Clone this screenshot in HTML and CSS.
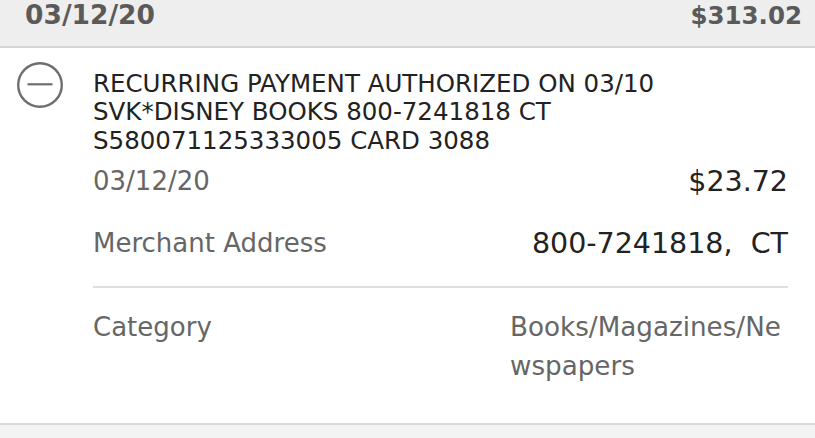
FILE: index.html
```html
<!DOCTYPE html>
<html>
<head>
<meta charset="utf-8">
<link rel="stylesheet" href="styles.css">
</head>
<body>
<div class="header">
  <span class="header-date">03/12/20</span>
  <span class="header-total">$313.02</span>
</div>
<div class="txn">
  <div class="txn-icon">
    <svg width="48" height="48" viewBox="0 0 48 48">
      <circle cx="24" cy="24" r="21.8" fill="none" stroke="#6e6e6e" stroke-width="2.4"/>
      <line x1="11.5" y1="23.3" x2="36.5" y2="23.3" stroke="#6e6e6e" stroke-width="2.2"/>
    </svg>
  </div>
  <div class="txn-body">
    <div class="txn-desc">RECURRING PAYMENT AUTHORIZED ON 03/10<br>SVK*DISNEY BOOKS 800-7241818 CT<br>S580071125333005 CARD 3088</div>
    <div class="row row-date">
      <div class="label">03/12/20</div>
      <div class="value amount">$23.72</div>
    </div>
    <div class="row row-merchant">
      <div class="label">Merchant Address</div>
      <div class="value amount">800-7241818,&nbsp; CT</div>
    </div>
    <div class="row row-category">
      <div class="label">Category</div>
      <div class="value category">Books/Magazines/Newspapers</div>
    </div>
  </div>
</div>
<div class="footer"></div>
</body>
</html>
```

FILE: styles.css
```css
html, body {
  margin: 0;
  padding: 0;
  background: #ffffff;
  font-family: "DejaVu Sans", Verdana, sans-serif;
}

.header {
  height: 46px;
  background: #eeeeee;
  border-bottom: 2px solid #d4d4d4;
  display: flex;
  justify-content: space-between;
  align-items: baseline;
  padding: 0 13px 0 25px;
  font-weight: bold;
  line-height: 30px;
  color: #5a5a5a;
}

.header-date {
  font-size: 26.5px;
}

.header-total {
  font-size: 24.5px;
}

.txn {
  display: flex;
  border-bottom: 2px solid #dadada;
}

.txn-icon {
  width: 93px;
  flex: none;
}

.txn-icon svg {
  display: block;
  margin: 13px 0 0 16px;
}

.txn-body {
  flex: 1;
  padding: 21.5px 27px 37px 0;
}

.txn-desc {
  font-size: 24.5px;
  line-height: 28.5px;
  color: #222222;
}

.row {
  display: grid;
  grid-template-columns: 1fr 278px;
}

.label {
  font-size: 26px;
  line-height: 34px;
  color: #666666;
}

.value {
  color: #222222;
}

.amount {
  text-align: right;
  font-size: 28.5px;
  line-height: 34px;
  margin-top: 1px;
}

.row-date {
  margin-top: 9px;
}

.row-merchant {
  margin-top: 27px;
  padding-bottom: 25px;
  border-bottom: 2px solid #dedede;
}

.row-category {
  margin-top: 20px;
}

.row-category .label {
  line-height: 39px;
}

.category {
  font-size: 26.2px;
  line-height: 39px;
  color: #666666;
  word-break: break-all;
}

.footer {
  height: 20px;
  background: #f3f3f3;
}
```
